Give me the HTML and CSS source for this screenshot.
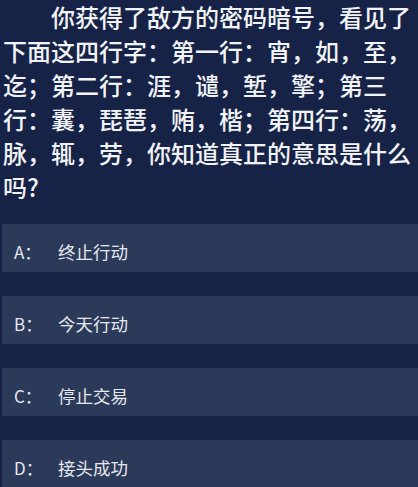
FILE: index.html
```html
<!DOCTYPE html>
<html lang="zh-CN">
<head>
  <meta charset="UTF-8" />
  <meta name="viewport" content="width=device-width, initial-scale=1.0"/>
  <title>密码暗号</title>
  <link rel="stylesheet" href="styles.css">
</head>
<body>

<div class="quiz">
  <p class="question">你获得了敌方的密码暗号，看见了下面这四行字：第一行：宵，如，至，迄；第二行：涯，谴，堑，擎；第三行：囊，琵琶，贿，楷；第四行：荡，脉，辄，劳，你知道真正的意思是什么吗?</p>

  <div class="options">
    <div class="option"><span class="label">A：</span><span class="text">终止行动</span></div>
    <div class="option"><span class="label">B：</span><span class="text">今天行动</span></div>
    <div class="option"><span class="label">C：</span><span class="text">停止交易</span></div>
    <div class="option"><span class="label">D：</span><span class="text">接头成功</span></div>
  </div>
</div>

</body>
</html>
```

FILE: styles.css
```css
body {
  margin: 0;
  background: #162347;
  font-family: "Noto Sans CJK SC", "Noto Sans", sans-serif;
  overflow: hidden;
}
.quiz {
  padding: 0 0 0 3px;
}
.question {
  margin: 0;
  width: 410px;
  color: #f2f3f6;
  font-size: 24px;
  font-weight: 500;
  line-height: 34px;
  text-indent: 48px;
  line-break: strict;
}
.options {
  display: flex;
  flex-direction: column;
  gap: 24px;
  margin-top: 20px;
  margin-left: -1px;
}
.option {
  box-sizing: border-box;
  height: 48px;
  padding-top: 6px;
  background: #2c3a5a;
  color: #e4e7ee;
  display: flex;
  align-items: center;
}
.label {
  width: 44px;
  padding-left: 12px;
  font-size: 17px;
}
.text {
  font-size: 17.5px;
}
```
